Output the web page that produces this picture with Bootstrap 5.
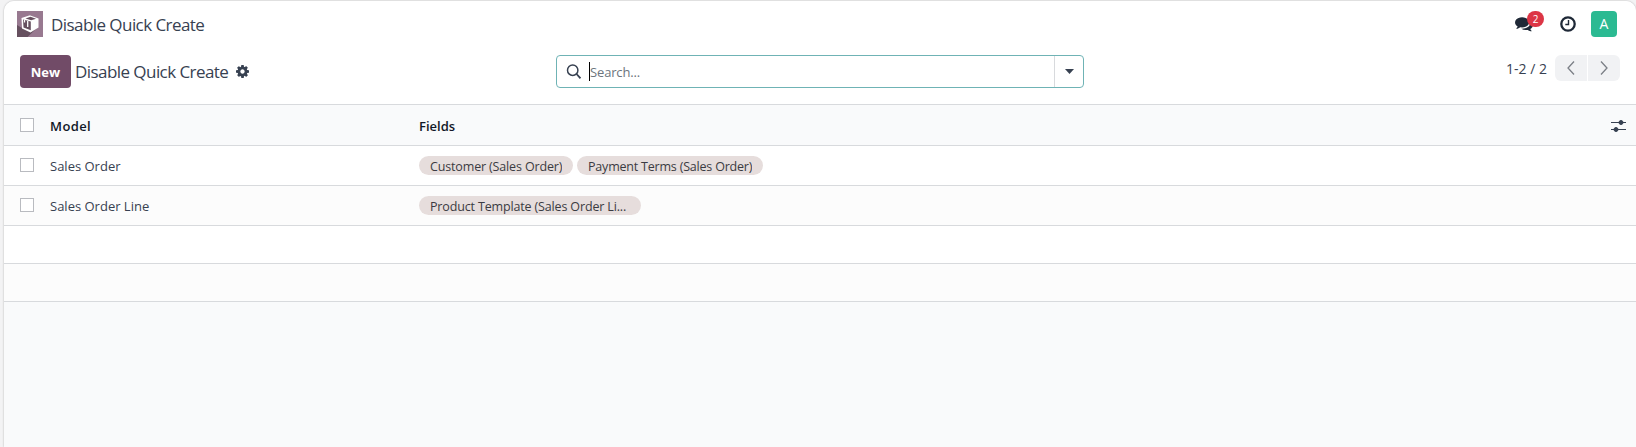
<!DOCTYPE html>
<html lang="en">
<head>
<meta charset="utf-8">
<title>Disable Quick Create</title>
<link href="https://cdn.jsdelivr.net/npm/bootstrap@5.3.0/dist/css/bootstrap.min.css" rel="stylesheet">
<style>
html,body{height:100%}
body{font-family:"Open Sans","Noto Sans",sans-serif;font-size:13px;line-height:20px;color:#374151;background:#f3f3f4;overflow:hidden}
svg{flex:none}
.shell{margin-left:4px;margin-top:1px;height:446px;background:#f9fafb;border-radius:10px 10px 0 0;box-shadow:0 0 2px rgba(0,0,0,.3)}
.topbar{height:45px;padding:0 19px 0 13px}
.control{height:58px;padding:9px 16px 0 16px}
.title-text{font-size:17px;line-height:24px;letter-spacing:-.56px;white-space:nowrap}
.topbar .title-text{padding-top:2px}
.fit{display:inline-block;white-space:nowrap}
.btn-new{background:#714b67;color:#fff;width:51px;height:33px;padding:0;font-size:13px;line-height:20px;font-weight:700;border-radius:4px;border:0}
.search{width:528px;height:33px;border:1px solid #6fb3b5;border-radius:4px;margin-left:307px}
.caret{width:1px;height:19px;background:#000}
.toggle{width:29px;border-left:1px solid #d8dadd}
.pager-btn{width:32px;height:26px;background:#f1f2f4}
.avatar{width:26px;height:26px;border-radius:4px;background:#2bba92;color:#fff;font-size:14px;padding-top:1px}
.count{width:17px;height:16px;border-radius:8px;background:#dc3545;color:#fff;font-size:10px;line-height:17px;left:12px;top:-5px}
.line{border-bottom:1px solid #d8dadd;padding:0 10px 0 16px}
.head{height:42px;border-top:1px solid #d8dadd;background:#f9fafb;color:#111827;font-weight:600}
.head .fit{padding-top:2px}
.rec{height:40px}.blank{height:38px}
.odd{background:#fff}.even{background:#fcfcfc}
.box{width:14px;height:14px;border:1px solid #b9bbc0;background:#fff;flex:none;margin-right:16px;margin-bottom:1px}
.c-model{width:369px}
.tag{height:19px;border-radius:10px;background:#e6dddc;color:#3b3b42;padding:0 11px;margin-right:4px;font-size:12.5px;letter-spacing:-.15px}
.tag-customer{width:154px}
.tag-terms{width:186px;letter-spacing:-.2px}
.tag-long{width:222px}
.tag span{height:18px;line-height:22px;overflow:hidden;white-space:nowrap}
</style>
<script src="https://cdn.jsdelivr.net/npm/bootstrap@5.3.0/dist/js/bootstrap.bundle.min.js"></script>
</head>
<body>
<main class="shell overflow-hidden">
  <header class="topbar d-flex align-items-center bg-white">
    <svg width="26" height="26" viewBox="0 0 26 26"><rect width="26" height="26" fill="#987990"/><path d="M0 26V14L5 17 13 4l8 4v8L10.500 26z" fill="#66505f"/><path d="M4.500 7L13 4.300 21.500 7.500v9L13.500 21.500 5 17.500z" fill="#fff"/><path d="M8.500 7.400L13.500 5.800l5.500 1.900-4.800 1.500zM6 8.600l7.800 2v8.600L6.500 16.500z" fill="#66505f"/><path d="M7.500 9v2.500M10.700 10v6" stroke="#fff" stroke-width="1.300"/></svg>
    <span class="title-text ms-2"><span class="fit">Disable Quick Create</span></span>
    <div class="d-flex align-items-center ms-auto">
      <span class="position-relative d-flex">
        <svg width="18" height="16" viewBox="0 0 1792 1600" fill="#1f2937"><path d="M1408 640q0 139-94 257t-256.500 186.500T704 1152q-86 0-176-16-124 88-278 128-36 9-86 16h-3q-11 0-20.500-8t-11.500-21q-1-3-1-6.500t.5-6.500 2-6l2.500-5 3.500-5.500 4-5 4.500-5 4-4.500q5-6 23-25t26-29.500 22.500-29 25-38.500 20.500-44Q142 974 71 867T0 640q0-139 94-257t256.500-186.500T704 128t353.500 68.500T1314 383t94 257zm384 256q0 120-71 224.500T1526 1297q10 24 20.500 44t25 38.500 22.500 29 26 29.500 23 25q1 1 4 4.500t4.500 5 4 5 3.500 5.500l2.500 5 2 6 .5 6.500-1 6.500q-3 14-13 22t-22 7q-50-7-86-16-154-40-278-128-90 16-176 16-271 0-472-132 58 4 88 4 161 0 309-45t264-129q125-92 192-212t67-254q0-77-23-152 129 71 204 178t75 230z"/></svg>
        <span class="count position-absolute text-center">2</span>
      </span>
      <svg style="margin:0 15px 0 27px" width="16" height="16" viewBox="0 0 16 16" fill="none" stroke="#1f2937"><circle cx="8" cy="8" r="6.700" stroke-width="2.300"/><path d="M8.500 4v4.500H5.300" stroke-width="1.400"/></svg>
      <span class="avatar d-flex align-items-center justify-content-center">A</span>
    </div>
  </header>
  <div class="control d-flex align-items-start bg-white">
    <button class="btn btn-new"><span class="fit">New</span></button>
    <div class="d-flex align-items-center" style="height:33px;width:178px">
      <span class="title-text" style="margin-left:4px;padding-top:1px"><span class="fit">Disable Quick Create</span></span>
      <svg style="margin-left:8px" width="13" height="13" viewBox="0 0 1536 1536" fill="#374151"><path d="M1024 768q0-106-75-181t-181-75-181 75-75 181 75 181 181 75 181-75 75-181zm512-109v222q0 12-8 23t-20 13l-185 28q-19 54-39 91 35 50 107 138 10 12 10 25t-9 23q-27 37-99 108t-94 71q-12 0-26-9l-138-108q-44 23-91 38-16 136-29 186-7 28-36 28H657q-14 0-24.500-8.500T621 1506l-28-184q-49-16-90-37l-141 107q-10 9-25 9-14 0-25-11-126-114-165-168-7-10-7-23 0-12 8-23 15-21 51-66.500t54-70.500q-27-50-41-99L29 913q-13-2-21-12.500T0 877V655q0-12 8-23t19-13l186-28q14-46 39-92-40-57-107-138-10-12-10-24 0-10 9-23 26-36 98.500-107.500T337 135q13 0 26 10l138 107q44-23 91-38 16-136 29-186 7-28 36-28h222q14 0 24.500 8.500T915 30l28 184q49 16 90 37l142-107q9-9 24-9 13 0 25 10 129 119 165 170 7 8 7 22 0 12-8 23-15 21-51 66.500t-54 70.500q26 50 41 98l183 28q13 2 21 12.500t8 23.500z"/></svg>
    </div>
    <div class="search d-flex align-items-stretch">
      <div class="d-flex align-items-center flex-grow-1" style="padding-left:9px">
        <svg width="15" height="15" viewBox="0 0 15 15" fill="none" stroke="#374151"><circle cx="6.700" cy="6.200" r="5.200" stroke-width="1.500"/><path d="M10.500 10l4 4.300" stroke-width="1.800"/></svg>
        <span class="caret" style="margin-left:8px"></span><span class="fit text-secondary" style="letter-spacing:-.15px;padding-top:1px">Search...</span>
      </div>
      <div class="toggle d-flex align-items-center justify-content-center"><svg width="9" height="5" viewBox="0 0 9 5"><path d="M0 0h9L4.500 5z" fill="#374151"/></svg></div>
    </div>
    <div class="d-flex align-items-center ms-auto">
      <span class="fit" style="font-size:14px;margin-right:8px;padding-top:2px">1-2 / 2</span>
      <span class="pager-btn d-flex align-items-center justify-content-center rounded-start"><svg width="8" height="14" viewBox="0 0 8 14" fill="none" stroke="#7b7f86" stroke-width="1.300"><path d="M7 .5L1 7l6 6.500"/></svg></span>
      <span class="pager-btn d-flex align-items-center justify-content-center rounded-end" style="margin-left:1px"><svg width="8" height="14" viewBox="0 0 8 14" fill="none" stroke="#7b7f86" stroke-width="1.300"><path d="M1 .5L7 7l-6 6.500"/></svg></span>
    </div>
  </div>
  <section>
    <div class="line head d-flex align-items-center"><span class="box"></span><span class="c-model"><span class="fit" style="letter-spacing:.4px">Model</span></span><span class="fit">Fields</span>
      <svg class="ms-auto" style="margin-top:2px" width="15" height="14" viewBox="0 0 15 14" fill="#374151" stroke="#374151"><path d="M0 3.500h15M0 10.500h15" stroke-width="1.200"/><circle cx="10" cy="3.500" r="2"/><circle cx="5" cy="10.500" r="2"/></svg></div>
    <div class="line rec odd d-flex align-items-center"><span class="box"></span><span class="c-model"><span class="fit">Sales Order</span></span>
      <span class="tag tag-customer d-flex"><span class="fit">Customer (Sales Order)</span></span><span class="tag tag-terms d-flex"><span class="fit">Payment Terms (Sales Order)</span></span></div>
    <div class="line rec even d-flex align-items-center"><span class="box"></span><span class="c-model"><span class="fit">Sales Order Line</span></span>
      <span class="tag tag-long d-flex"><span class="fit">Product Template (Sales Order Li...</span></span></div>
    <div class="line blank odd"></div>
    <div class="line blank even"></div>
  </section>
</main>
</body>
</html>
